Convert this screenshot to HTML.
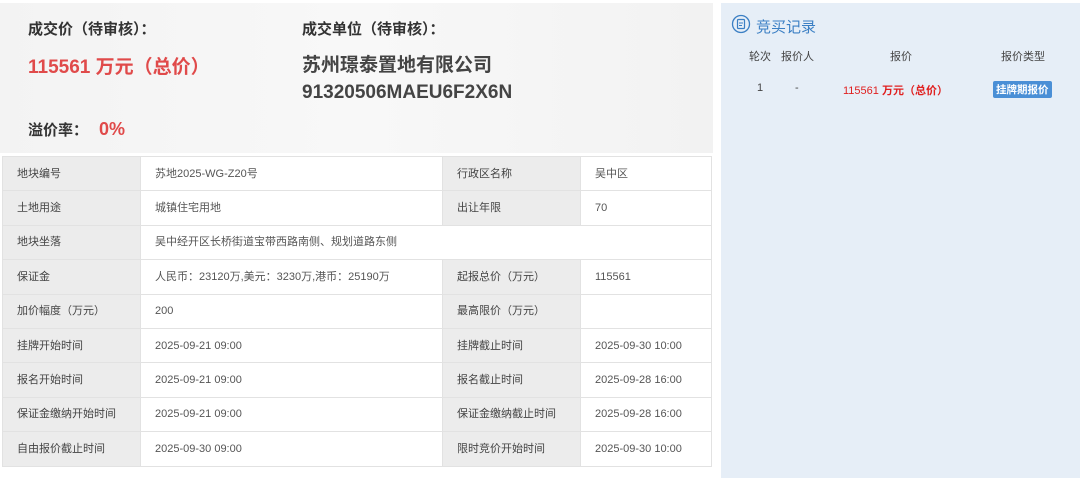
<!DOCTYPE html>
<html><head><meta charset="utf-8"><style>
*{margin:0;padding:0;box-sizing:border-box}
body{width:1080px;height:478px;background:#fff;font-family:"Liberation Sans","Noto Sans CJK SC",sans-serif;position:relative;overflow:hidden}
.top{position:absolute;left:0;top:3px;width:713px;height:150px;background:linear-gradient(90deg,#f3f3f3,#f8f8f8 50%,#f2f2f2)}
.t{position:absolute;color:#333;font-weight:bold}
.red{color:#e04a4a}
table{position:absolute;left:2px;top:156px;width:710px;border-collapse:collapse;font-size:11px;color:#555}
td{height:34.4px;border:1px solid #e2e2e2;padding-left:14px;vertical-align:middle;line-height:14px}
td.l{background:#ececec;color:#444}
.right{position:absolute;left:721px;top:3px;width:359px;height:475px;background:#e6eef7}
.r{position:absolute;font-size:11px;color:#444}
</style></head><body>
<div class="top"></div>
<div class="t" style="left:28px;top:18px;font-size:15px">成交价（待审核）：</div>
<div class="t" style="left:302px;top:18px;font-size:15px">成交单位（待审核）：</div>
<div class="t red" style="left:28px;top:52px;font-size:19px">115561 万元（总价）</div>
<div class="t" style="left:302px;top:52px;font-size:19px;color:#444;line-height:27px">苏州璟泰置地有限公司<br>91320506MAEU6F2X6N</div>
<div class="t" style="left:28px;top:119px;font-size:15px">溢价率：</div>
<div class="t red" style="left:99px;top:119px;font-size:18px">0%</div>
<table>
<colgroup><col style="width:138px"><col style="width:302px"><col style="width:138px"><col></colgroup>
<tr><td class="l">地块编号</td><td>苏地2025-WG-Z20号</td><td class="l">行政区名称</td><td>吴中区</td></tr>
<tr><td class="l">土地用途</td><td>城镇住宅用地</td><td class="l">出让年限</td><td>70</td></tr>
<tr><td class="l">地块坐落</td><td colspan="3">吴中经开区长桥街道宝带西路南侧、规划道路东侧</td></tr>
<tr><td class="l">保证金</td><td>人民币：23120万,美元：3230万,港币：25190万</td><td class="l">起报总价（万元）</td><td>115561</td></tr>
<tr><td class="l">加价幅度（万元）</td><td>200</td><td class="l">最高限价（万元）</td><td></td></tr>
<tr><td class="l">挂牌开始时间</td><td>2025-09-21 09:00</td><td class="l">挂牌截止时间</td><td>2025-09-30 10:00</td></tr>
<tr><td class="l">报名开始时间</td><td>2025-09-21 09:00</td><td class="l">报名截止时间</td><td>2025-09-28 16:00</td></tr>
<tr><td class="l">保证金缴纳开始时间</td><td>2025-09-21 09:00</td><td class="l">保证金缴纳截止时间</td><td>2025-09-28 16:00</td></tr>
<tr><td class="l">自由报价截止时间</td><td>2025-09-30 09:00</td><td class="l">限时竞价开始时间</td><td>2025-09-30 10:00</td></tr>
</table>
<div class="right"></div>
<svg style="position:absolute;left:731px;top:14px" width="20" height="20" viewBox="0 0 20 20"><circle cx="10" cy="10" r="8.5" fill="none" stroke="#3b7fc4" stroke-width="1.3"/><rect x="6.5" y="5.5" width="7" height="9" rx="1" fill="none" stroke="#3b7fc4" stroke-width="1.2"/><path d="M8 9h4M8 11.5h3" stroke="#3b7fc4" stroke-width="1.1"/></svg>
<div class="r" style="left:756px;top:16px;font-size:15px;color:#3b7fc4">竞买记录</div>
<div class="r" style="left:749px;top:48px">轮次</div>
<div class="r" style="left:781px;top:48px">报价人</div>
<div class="r" style="left:890px;top:48px">报价</div>
<div class="r" style="left:1001px;top:48px">报价类型</div>
<div class="r" style="left:757px;top:82px">1</div>
<div class="r" style="left:795px;top:82px">-</div>
<div class="r" style="left:843px;top:82px;color:#e02020">115561 <b>万元（总价）</b></div>
<div class="r" style="left:993px;top:81px;background:#4a8fd6;color:#fff;font-weight:bold;padding:1px 3px;border-radius:2px;font-size:10.5px">挂牌期报价</div>
</body></html>
